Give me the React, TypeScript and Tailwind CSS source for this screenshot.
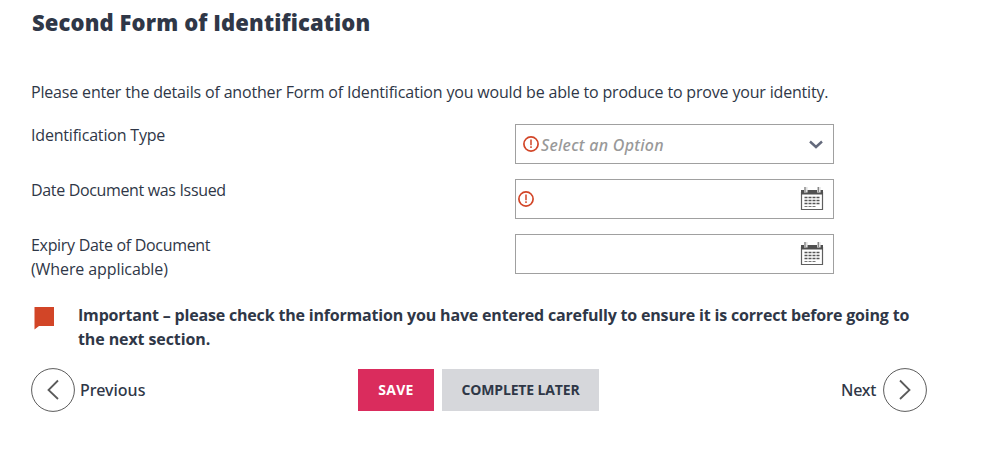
import React from 'react';
import type { ReactNode } from 'react';

interface FieldRowProps {
  label: ReactNode;
  children: ReactNode;
}

function AlertIcon() {
  return (
    <svg width="16" height="16" viewBox="0 0 16 16" className="shrink-0" fill="none" stroke="#d24527">
      <circle cx="8" cy="8" r="7.1" strokeWidth="1.7" />
      <path d="M8 3.4v5.8M8 10.3v1.8" strokeWidth="1.5" />
    </svg>
  );
}

function CalendarIcon() {
  return (
    <svg width="24" height="24" viewBox="0 0 24 24" className="shrink-0" fill="none">
      <path d="M1.5 5v17.5h21V5" fill="#fff" stroke="#5f5f5f" strokeWidth="1.2" />
      <path d="M1 3h22v4.5H1z" fill="#505050" />
      <path d="M4 0h3.6v5.5H4zM17 0h3.6v5.5H17z" fill="#e2e2e2" />
      <path d="M5 0v5M18.3 0v5" stroke="#777" strokeWidth="1.1" />
      <path d="M4.5 10.5h15M4.5 13.5h15M4.5 16.5h15" stroke="#555" strokeWidth="1.5" strokeDasharray="3 1" />
      <path d="M4.5 19.5h11" stroke="#777" strokeWidth="1.2" strokeDasharray="3 1" />
    </svg>
  );
}

function ArrowCircle({ points }: { points: string }) {
  return (
    <svg width="44" height="44" viewBox="0 0 44 44" className="shrink-0" fill="none" stroke="#5b5b5b">
      <circle cx="22" cy="22" r="21.4" strokeWidth="1" />
      <polyline points={points} strokeWidth="1.8" />
    </svg>
  );
}

function FieldRow({ label, children }: FieldRowProps) {
  return (
    <div className="flex h-10 items-start">
      <div className="-mt-px w-[484px] shrink-0 text-base leading-6">{label}</div>
      <div className="flex h-10 w-[319px] items-center border border-[#a0a0a0] bg-white">{children}</div>
    </div>
  );
}

export default function App() {
  return (
    <main className="h-[463px] w-[983px] overflow-hidden bg-white pl-[31px] font-['Open_Sans','Noto_Sans',sans-serif] text-[#2f3747]">
      <h1 className="pt-1.5 pl-px text-[22px] leading-8 font-extrabold tracking-[0.12px] whitespace-nowrap">Second Form of Identification</h1>
      <p className="mt-[42px] text-base leading-6 tracking-[-0.175px] whitespace-nowrap">
        Please enter the details of another Form of Identification you would be able to produce to prove your identity.
      </p>

      <form className="mt-5 flex flex-col gap-[15px]">
        <FieldRow label={<span className="tracking-[-0.19px]">Identification Type</span>}>
          <div className="flex w-full items-center pr-2.5 pl-[7px]">
            <AlertIcon />
            <span className="mt-0.5 ml-0.5 flex-1 font-['Noto_Sans',sans-serif] text-base leading-6 font-medium tracking-[0.28px] text-[#999] italic">
              Select an Option
            </span>
            <svg width="14" height="9" viewBox="0 0 14 9" fill="none" stroke="#646a7c" strokeWidth="2.4">
              <polyline points="1,1.5 7,7 13,1.5" />
            </svg>
          </div>
        </FieldRow>
        <FieldRow label={<span className="tracking-[-0.34px]">Date Document was Issued</span>}>
          <div className="flex w-full items-center justify-between pr-[9px] pl-0.5">
            <AlertIcon />
            <CalendarIcon />
          </div>
        </FieldRow>
        <FieldRow
          label={
            <>
              <span className="tracking-[-0.31px]">Expiry Date of Document</span><br />
              <span className="tracking-[-0.1px]">(Where applicable)</span>
            </>
          }
        >
          <div className="flex w-full items-center justify-end pr-[9px]">
            <CalendarIcon />
          </div>
        </FieldRow>
      </form>

      {/* Notice */}
      <div className="mt-[29px] flex">
        <svg width="20" height="23" viewBox="0 0 20 23" className="mt-1 ml-[3px] shrink-0" fill="#d24527">
          <path d="M.5 0H20v19H5L.5 22.5z" />
        </svg>
        <p className="ml-6 text-base leading-6 font-bold whitespace-nowrap">
          <span className="tracking-[-0.18px]">Important – please check the information you have entered carefully to ensure it is correct before going to</span><br />
          <span className="tracking-[-0.1px]">the next section.</span>
        </p>
      </div>

      {/* Section navigation */}
      <nav className="mt-[17px] flex h-11 w-[896px] items-center text-base">
        <button type="button" className="flex w-[327px] items-center gap-[5px] font-['Noto_Sans',sans-serif] font-medium">
          <ArrowCircle points="27,12.5 17.5,22 27,31" />
          <span>Previous</span>
        </button>
        <button type="button" className="h-[42px] w-[76px] bg-[#da2c5d] text-sm font-bold tracking-[0.3px] text-white">SAVE</button>
        <button type="button" className="ml-2 h-[42px] w-[157px] bg-[#d6d7db] text-sm font-bold tracking-[-0.15px] whitespace-nowrap">COMPLETE LATER</button>
        <button type="button" className="flex flex-1 items-center justify-end gap-[7px] font-['Noto_Sans',sans-serif] font-medium">
          <span className="tracking-[-0.3px]">Next</span>
          <ArrowCircle points="17,12.5 26.5,22 17,31" />
        </button>
      </nav>
    </main>
  );
}
